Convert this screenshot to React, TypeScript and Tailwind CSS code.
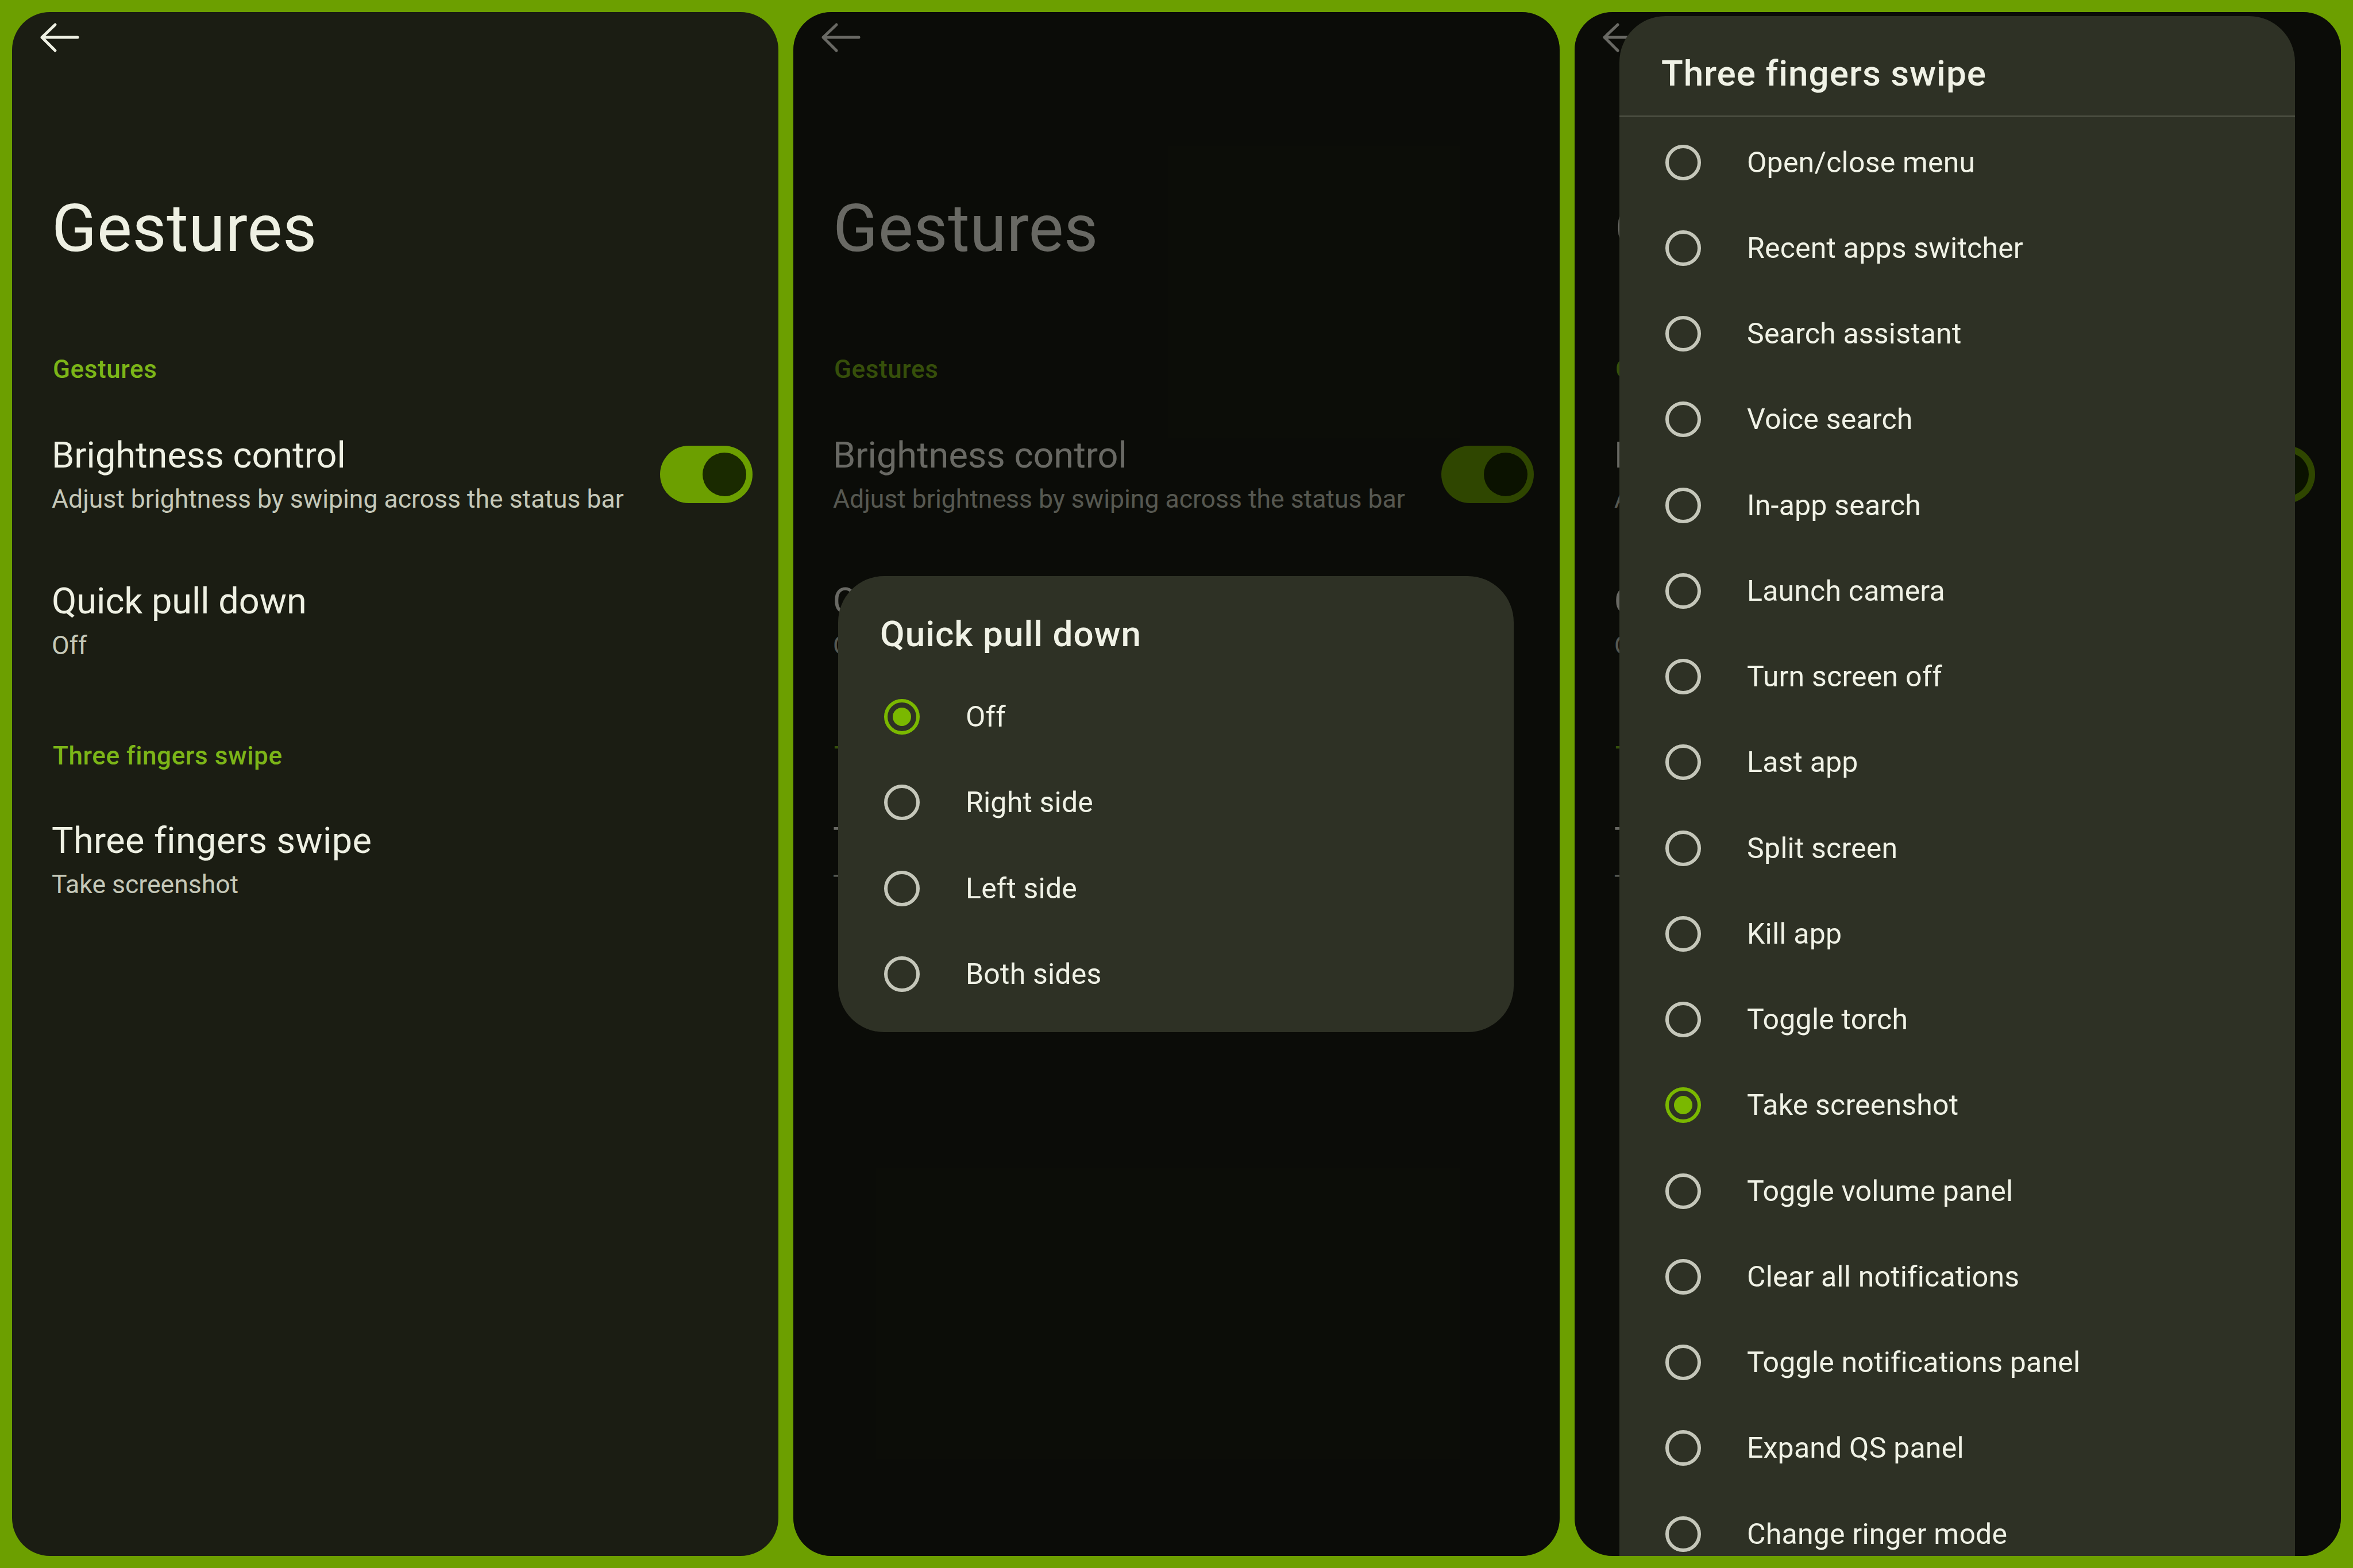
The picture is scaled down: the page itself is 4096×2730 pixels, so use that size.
import React from "react";

function BackArrow() {
  return (
    <svg width="70" height="54" viewBox="0 0 70 54" className="ml-[48px] mt-[18px]">
      <path
        d="M4 26 H66 M4 26 L27 4 M4 26 L27 49"
        stroke="#eef0e3"
        strokeWidth="5"
        strokeLinecap="round"
        strokeLinejoin="round"
        fill="none"
      />
    </svg>
  );
}

function Toggle() {
  return (
    <div className="w-[161px] h-[100px] rounded-full bg-[#6c9f00] flex items-center justify-end pr-[11px] shrink-0">
      <div className="w-[76px] h-[76px] rounded-full bg-[#1a2a00]" />
    </div>
  );
}

function Settings() {
  return (
    <div className="flex flex-col">
      <div className="h-[319px]">
        <BackArrow />
      </div>
      <div className="pl-[69px] text-[115px] leading-[115px] h-[115px] tracking-[0.5px] text-[#eef0e3]">Gestures</div>
      <div className="mt-[160px] pl-[71px] text-[44px] leading-[56px] tracking-[0.6px] font-medium text-[#7cb518]">Gestures</div>
      <div className="mt-[84px] pl-[69px] pr-[45px] flex items-center justify-between">
        <div className="flex flex-col">
          <div className="text-[63px] leading-[76px] text-[#eef0e3]">Brightness control</div>
          <div className="mt-[10px] text-[44.5px] leading-[56px] text-[#c5c8b8]">
            Adjust brightness by swiping across the status bar
          </div>
        </div>
        <Toggle />
      </div>
      <div className="mt-[112px] pl-[69px] flex flex-col">
        <div className="text-[63px] leading-[76px] text-[#eef0e3]">Quick pull down</div>
        <div className="mt-[11px] text-[44.5px] leading-[56px] text-[#c5c8b8]">Off</div>
      </div>
      <div className="mt-[136px] pl-[71px] text-[44px] leading-[56px] tracking-[0.6px] font-medium text-[#7cb518]">
        Three fingers swipe
      </div>
      <div className="mt-[82px] pl-[69px] flex flex-col">
        <div className="text-[63px] leading-[76px] tracking-[0.4px] text-[#eef0e3]">Three fingers swipe</div>
        <div className="mt-[10px] text-[44.5px] leading-[56px] text-[#c5c8b8]">Take screenshot</div>
      </div>
    </div>
  );
}

function Radio({ checked }: { checked: boolean }) {
  return checked ? (
    <div className="w-[62px] h-[62px] rounded-full border-[6px] border-[#7ab800] flex items-center justify-center shrink-0">
      <div className="w-[32px] h-[32px] rounded-full bg-[#7ab800]" />
    </div>
  ) : (
    <div className="w-[62px] h-[62px] rounded-full border-[6px] border-[#c5c7ba] shrink-0" />
  );
}

function Row({ label, checked, tall }: { label: string; checked: boolean; tall: boolean }) {
  return (
    <div className={(tall ? "h-[149.5px]" : "h-[149.25px]") + " flex items-center pl-[80px] shrink-0"}>
      <Radio checked={checked} />
      <div className="ml-[80px] text-[50px] leading-[60px] tracking-[0.2px] text-[#f0f2e6]">{label}</div>
    </div>
  );
}

const quickItems = ["Off", "Right side", "Left side", "Both sides"];

const swipeItems = [
  "Open/close menu",
  "Recent apps switcher",
  "Search assistant",
  "Voice search",
  "In-app search",
  "Launch camera",
  "Turn screen off",
  "Last app",
  "Split screen",
  "Kill app",
  "Toggle torch",
  "Take screenshot",
  "Toggle volume panel",
  "Clear all notifications",
  "Toggle notifications panel",
  "Expand QS panel",
  "Change ringer mode",
];

function Panel({ children, dim }: { children?: React.ReactNode; dim?: boolean }) {
  return (
    <div className="relative overflow-hidden rounded-[66px] bg-[#1b1d13]">
      <Settings />
      {dim && <div className="absolute inset-0 bg-black/[0.56]" />}
      {children}
    </div>
  );
}

export default function App() {
  return (
    <div className="w-[4096px] h-[2730px] bg-[#6c9f00] p-[21px] grid grid-cols-3 gap-[26px] font-[family-name:Roboto,sans-serif]">
      <Panel />
      <Panel dim>
        <div className="absolute left-[78px] top-[982px] w-[1176px] h-[794px] rounded-[80px] bg-[#2e3125] flex flex-col">
          <div className="pt-[64px] pl-[73px] text-[62px] leading-[74px] tracking-[1px] font-medium text-[#f0f2e6]">
            Quick pull down
          </div>
          <div className="mt-[32px] flex flex-col">
            {quickItems.map((it, i) => (
              <Row key={it} label={it} checked={i === 0} tall />
            ))}
          </div>
        </div>
      </Panel>
      <Panel dim>
        <div className="absolute left-[78px] top-[7px] w-[1176px] h-[2800px] rounded-t-[80px] bg-[#2e3125] flex flex-col">
          <div className="pt-[63px] pl-[73px] text-[62px] leading-[74px] tracking-[1px] font-medium text-[#f0f2e6]">
            Three fingers swipe
          </div>
          <div className="mt-[36px] h-[3px] bg-[#494c3f]" />
          <div className="mt-[4px] flex flex-col">
            {swipeItems.map((it) => (
              <Row key={it} label={it} checked={it === "Take screenshot"} tall={false} />
            ))}
          </div>
        </div>
      </Panel>
    </div>
  );
}
